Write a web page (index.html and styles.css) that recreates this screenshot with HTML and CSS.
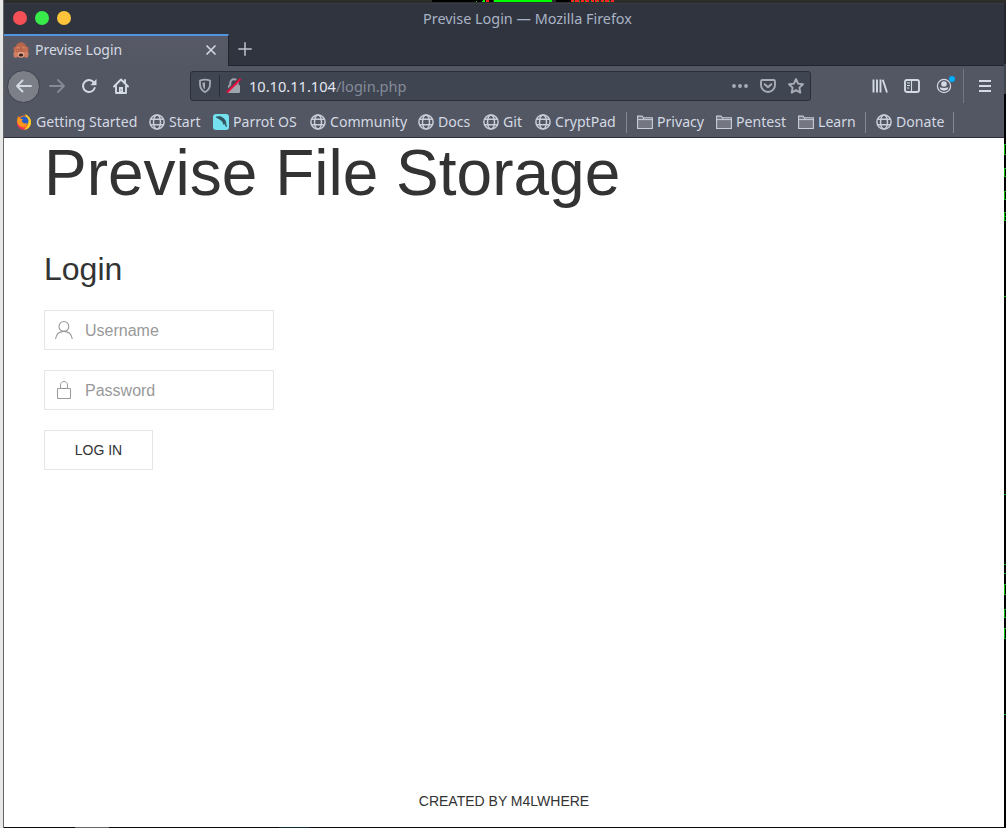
FILE: index.html
```html
<!DOCTYPE html>
<html lang="en">
<head>
<meta charset="utf-8">
<title>Previse Login</title>
<link rel="stylesheet" href="styles.css">
</head>
<body>
<svg class="defs" width="0" height="0" aria-hidden="true">
  <symbol id="globe" viewBox="0 0 16 16"><g fill="none" stroke="#c9cdd8" stroke-width="1.5"><circle cx="8" cy="8" r="7.1"/><ellipse cx="8" cy="8" rx="3.5" ry="7.1"/><path d="M1.6 5.3h12.8M1.6 10.7h12.8"/></g></symbol>
  <symbol id="folder" viewBox="0 0 16 16"><path d="M.6 14.500V2.100H5l1.500 1.700h8.900v10.700z" fill="#747782" stroke="#c9cdd8" stroke-width="1.100"/><path d="M.6 5.600h5l1.300-1.800" fill="none" stroke="#c9cdd8"/><path d="M5.500 5.600h9.900" stroke="#c9cdd8"/></symbol>
</svg>
<div class="desktop">
  <svg class="backdrop" width="1006" height="828" viewBox="0 0 1006 828" shape-rendering="crispEdges">
    <path fill="#2d2d2c" d="M0 0h1006v3H0z"/>
    <path fill="#000" d="M432 0h61v2h-61zM556 0h15v2h-15z"/>
    <path fill="#0f0" d="M494 0h58v2h-58zM483 0h2v2h-2z"/>
    <path stroke="#f22" stroke-width="2" stroke-dasharray="3 1 4 2" d="M571 1h43"/>
    <path stroke="#0d0" stroke-dasharray="1 5" d="M573 1.5h41M476 1.5h12"/>
    <path fill="#f22" d="M486 0h3v2h-3z"/>
    <path fill="#e8e8e8" d="M0 0h3v828H0z"/><path fill="#666" d="M3 0h1v828H3z"/>
    <path fill="#24262d" d="M1004 3h2v91h-2z"/><path fill="#000" d="M1004 94h2v734h-2z"/>
    <path fill="#41454e" d="M1004 64h2v30h-2z"/>
    <path fill="none" stroke="#0b0" d="M1006 144.500h-1.500v10h1.500M1006 168.500h-1.500v8h1.500M1006 191.500h-1.500v8h1.500M1006 212.500h-1.500v8h1.500M1004 216.500h2M1004 296.500h2M1004 494.500h2M1004 564.500h2M1004 573.500h2M1006 584.500h-1.500v10h1.500M1006 609.500h-1.500v8h1.500M1006 628.500h-1.500v10h1.500M1004 714.500h2"/>
    <path fill="#08090b" d="M4 827h1002v1H4z"/><path fill="#626762" d="M75 827h34v1H75z"/><path fill="#102a35" d="M279 827h31v1h-31z"/>
  </svg>
  <div class="window">
    <header class="titlebar">
      <div class="lights"><i class="light red"></i><i class="light green"></i><i class="light yellow"></i></div>
      <span class="window-title">Previse Login — Mozilla Firefox</span>
    </header>
    <div class="tabs">
      <div class="tab">
        <svg width="16" height="16" viewBox="0 0 16 16"><path fill="#b9644c" d="M2.500 4.500Q4 1 7 .5L8 0l1 .5q3 .5 4.500 4L15.500 5.500v3.500L13 10v5H3v-5L.5 9V5.500z"/><path fill="#d17f62" d="M2.800 5.500L7.500 4v6l-2.700 1-.5 4.500H1L.3 11l2-2.500zM13.200 5.500L8.500 4v6l2.700 1 .5 4.500H15l.7-4.500-2-2.500z"/><path stroke="#a24f39" fill="none" stroke-width=".8" d="M3 7.200h4M3 9.200h4M13 7.200H9M13 9.200H9M8 4.500v5.500"/><ellipse cx="8" cy="12.700" rx="3.500" ry="3" fill="#e0a285"/><ellipse cx="8" cy="13" rx="2.200" ry="1.500" fill="#38201d"/></svg>
        <span class="tab-title">Previse Login</span>
        <svg class="close" width="12" height="12" viewBox="0 0 12 12"><path d="M1.500 1.500l9 9m0-9l-9 9" stroke="#d0d4de" stroke-width="1.700"/></svg>
      </div>
      <svg class="plus" width="16" height="16" viewBox="0 0 16 16"><path d="M8 1.300v13.400M1.300 8h13.400" stroke="#bfc4cf" stroke-width="1.500"/></svg>
    </div>
    <nav class="toolbar">
      <div class="back"><svg width="18" height="16" viewBox="0 0 18 16"><path d="M16 8H2.500M7.500 2.500L2 8l5.500 5.500" fill="none" stroke="#d3dae3" stroke-width="2" stroke-linecap="round" stroke-linejoin="round"/></svg></div>
      <svg class="forward" width="17" height="16" viewBox="0 0 17 16"><path d="M1 8h14M9 2l6 6-6 6" fill="none" stroke="#868a95" stroke-width="1.800" stroke-linecap="round" stroke-linejoin="round"/></svg>
      <svg class="reload" width="16" height="16" viewBox="0 0 16 16"><path d="M13.700 10A6 6 0 1 1 13 4.600" fill="none" stroke="#d3dae3" stroke-width="2" stroke-linecap="round"/><path d="M15.500 1v6.200H9.300z" fill="#d3dae3"/></svg>
      <svg class="home" width="16" height="16" viewBox="0 0 16 16"><path d="M1 8.500L8 1.500l7 7M3 7.500V15h10V7.500M12 2v3" fill="none" stroke="#d3dae3" stroke-width="1.900" stroke-linejoin="round" stroke-linecap="round"/><path d="M6 9h4v6H6z" fill="#d3dae3"/><path d="M7.500 11.500h1v1h-1z" fill="#535663"/></svg>
      <div class="urlbar">
        <svg class="shield" width="14" height="16" viewBox="0 0 14 16"><path d="M2 2.500Q7 .8 12 2.500V6c0 4-1.500 6.500-5 8.200C3.500 12.500 2 10 2 6z" fill="none" stroke="#a7abb4" stroke-width="1.800" stroke-linejoin="round"/><path d="M7 4.300v7.300C5 10 4.500 8 4.500 4.700Z" fill="#a7abb4"/></svg>
        <i class="url-rule"></i>
        <svg class="lock" width="16" height="16" viewBox="0 0 16 16"><path d="M4.300 8V5a3.700 3.700 0 0 1 7.400 0v3" fill="none" stroke="#a0a4ad" stroke-width="2"/><rect x="2" y="7" width="12" height="8" rx="1" fill="#a0a4ad"/><path d="M1 13L13.500 0" stroke="#404550" stroke-width="2"/><path d="M1 14.500L14.500 1" stroke="#f40b3d" stroke-width="2"/></svg>
        <span class="address">10.10.11.104<span class="path">/login.php</span></span>
        <svg class="dots" width="16" height="16" viewBox="0 0 16 16" fill="#a9adb6"><circle cx="2" cy="8" r="1.900"/><circle cx="8" cy="8" r="1.900"/><circle cx="14" cy="8" r="1.900"/></svg>
        <svg class="pocket" width="16" height="16" viewBox="0 0 16 16" fill="none" stroke="#a9adb6" stroke-width="1.900" stroke-linecap="round" stroke-linejoin="round"><path d="M2.500 2h11Q15 2 15 3.500V7a7 7 0 0 1-14 0V3.500Q1 2 2.500 2z"/><path d="M4.700 6.200L8 9.300l3.300-3.100"/></svg>
        <svg class="star" width="16" height="16" viewBox="0 0 16 16"><path d="M8 1l2.100 4.600 4.900.6-3.600 3.400.9 5L8 12.200l-4.300 2.400.9-5L1 6.200l4.900-.6z" fill="none" stroke="#a9adb6" stroke-width="1.900" stroke-linejoin="round"/></svg>
      </div>
      <svg class="library" width="16" height="16" viewBox="0 0 16 16" stroke="#d3dae3" stroke-width="1.900"><path d="M1.500 1.500v13M5 1.500v13M8.500 1.500v13M10.800 1.800L15 14.500"/></svg>
      <svg class="sidebar" width="16" height="16" viewBox="0 0 16 16"><rect x="1" y="2" width="14" height="12" rx="2" fill="none" stroke="#d3dae3" stroke-width="1.900"/><path d="M7.500 2v12M3 5h3M3 7.500h3M3 10h2" stroke="#d3dae3" stroke-width="1.100"/></svg>
      <svg class="account" width="20" height="20" viewBox="0 0 20 20"><circle cx="8" cy="11" r="6.600" fill="none" stroke="#d3dae3" stroke-width="1.200"/><circle cx="8" cy="9" r="2.800" fill="#d3dae3"/><path d="M3.700 12.300Q8 13.500 12.300 12.300 12 15.500 8 15.700 4 15.500 3.700 12.300z" fill="#d3dae3"/><circle cx="16" cy="4" r="3" fill="#00aeff"/></svg>
      <i class="tool-rule"></i>
      <svg class="menu" width="12" height="14" viewBox="0 0 12 14"><path d="M0 2h12M0 7h12M0 12h12" stroke="#d3dae3" stroke-width="2"/></svg>
    </nav>
    <div class="bookmarks">
      <span class="bookmark started"><svg width="16" height="16" viewBox="0 0 16 16"><circle cx="8" cy="8.500" r="7" fill="#ff7a20"/><path d="M9 0c4 2 6.500 5 6 9-.5 4-3 6.500-7 6.800C12 13 13 9 11 6z" fill="#ffcb28"/><circle cx="8" cy="7" r="4.500" fill="#245bc4"/><path d="M2 2l2 2.500 3 .8-1.500 2L8 9.500l3-.5c-.5 2.500-2.500 4-5 3.800C2.500 12.500 1 10 1 7z" fill="#ff941e"/><path d="M1 7c.5 4.500 4 7 8 6.500l-1 2.200C3.500 15.700.5 12 1 7z" fill="#f0305a"/></svg><span>Getting Started</span></span>
      <span class="bookmark start"><svg width="16" height="16"><use href="#globe"/></svg><span>Start</span></span>
      <span class="bookmark parrot"><svg width="16" height="16" viewBox="0 0 16 16"><rect width="16" height="16" rx="3" fill="#74e2ee"/><path d="M3 3l4-.6 3.500 1.800L12.500 7l1 6-2-3.500-.8 1L9.500 7.500 7 5.500z" fill="#31515c" stroke="#31515c" stroke-width=".6"/></svg><span>Parrot OS</span></span>
      <span class="bookmark community"><svg width="16" height="16"><use href="#globe"/></svg><span>Community</span></span>
      <span class="bookmark docs"><svg width="16" height="16"><use href="#globe"/></svg><span>Docs</span></span>
      <span class="bookmark git"><svg width="16" height="16"><use href="#globe"/></svg><span>Git</span></span>
      <span class="bookmark cryptpad"><svg width="16" height="16"><use href="#globe"/></svg><span>CryptPad</span></span>
      <i class="rule"></i>
      <span class="bookmark privacy"><svg width="16" height="16"><use href="#folder"/></svg><span>Privacy</span></span>
      <span class="bookmark pentest"><svg width="16" height="16"><use href="#folder"/></svg><span>Pentest</span></span>
      <span class="bookmark learn"><svg width="16" height="16"><use href="#folder"/></svg><span>Learn</span></span>
      <i class="rule"></i>
      <span class="bookmark donate"><svg width="16" height="16"><use href="#globe"/></svg><span>Donate</span></span>
      <i class="rule"></i>
    </div>
    <main class="page">
      <h1>Previse File Storage</h1>
      <h2>Login</h2>
      <form class="login">
        <label class="field"><svg width="20" height="20" viewBox="0 0 20 20" fill="none" stroke="#999" stroke-width="1.100"><circle cx="9.900" cy="6.400" r="4.900"/><path d="M1.500 19c.8-4.700 4.200-7.600 8.400-7.600s7.600 2.900 8.400 7.600"/></svg><input type="text" placeholder="Username"></label>
        <label class="field"><svg width="20" height="20" viewBox="0 0 20 20" fill="none" stroke="#999"><path d="M3.500 8.500h13v10h-13zM6.500 8V4.900C6.500 3 8 1.500 10 1.500s3.500 1.500 3.500 3.400V8"/></svg><input type="password" placeholder="Password"></label>
        <button type="button">LOG IN</button>
      </form>
      <footer>CREATED BY M4LWHERE</footer>
    </main>
  </div>
</div>
</body>
</html>
```
FILE: styles.css
```css
* { box-sizing: border-box; }
body { margin: 0; overflow: hidden; font-family: "Noto Sans", sans-serif; font-size: 14px; color: #d3dae3; }
svg { display: block; flex: none; }
.defs { position: absolute; }
.desktop { position: relative; width: 1006px; height: 828px; padding: 3px 2px 1px 4px; }
.backdrop { position: absolute; top: 0; left: 0; }
.window { position: relative; width: 1000px; height: 824px; display: flex; flex-direction: column; background: #fff; }
.titlebar { height: 31px; display: grid; grid-template-columns: 200px 1fr 153px; align-items: center; background: #2f343f; border-top: 1px solid #363b46; }
.lights { display: flex; gap: 8px; padding-left: 9px; margin-top: -2px; }
.light { width: 14px; height: 14px; border-radius: 50%; }
.red { background: #f45056; }
.green { background: #38eb4b; }
.yellow { background: #fdc43b; }
.window-title { text-align: center; font-size: 14.400px; line-height: 20px; color: #a9b3c4; padding-bottom: 1px; }
.tabs { height: 32px; display: flex; background: #2f343f; border-bottom: 1px solid #21242c; }
.tab { width: 225px; height: 32px; display: flex; align-items: center; padding: 0 11px 0 9px; background: linear-gradient(#575a66, #535663); border-top: 2px solid #5294e2; border-right: 1px solid #21242c; }
.tab > svg { margin-bottom: 2px; }
.tab-title { margin-left: 6px; flex: 1; line-height: 20px; padding-bottom: 2px; }
.plus { margin: 7px 0 0 8px; }
.toolbar { height: 41px; display: flex; align-items: center; padding-bottom: 1px; background: #535663; }
.back { width: 33px; height: 33px; margin-left: 3px; border: 1px solid #3e424d; border-radius: 50%; background: #7c7f87; display: flex; align-items: center; justify-content: center; }
.forward { margin-left: 9px; }
.reload { margin-left: 15px; }
.home { margin-left: 16px; }
.urlbar { width: 621px; height: 30px; margin-left: 61px; border: 1px solid #2b2e39; border-radius: 3px; background: #404552; display: flex; align-items: center; }
.shield { margin-left: 7px; }
.url-rule { width: 1px; height: 22px; margin-left: 7px; background: #2b2e39; }
.lock { margin-left: 6px; }
.address { margin-left: 7px; flex: 1; font-size: 14.600px; color: #e2e7ef; line-height: 20px; }
.path { color: #858b98; }
.pocket, .star { margin-left: 12px; }
.star { margin-right: 6px; }
.library { margin-left: 61px; }
.sidebar { margin-left: 16px; }
.account { margin: -2px 0 0 16px; }
.tool-rule { width: 1px; height: 34px; margin-left: 7px; background: #747782; }
.menu { margin-left: 15px; }
.bookmarks { height: 31px; display: flex; align-items: center; padding-left: 12px; background: #535663; border-bottom: 1px solid #2b2e39; }
.bookmark { display: flex; flex: none; align-items: center; gap: 4px; margin-right: 12px; white-space: nowrap; line-height: 20px; }
.bookmark > span { padding-bottom: 1px; font-size: 14.100px; }
.started { width: 121px; }
.start { width: 52px; }
.parrot { width: 85px; }
.community { width: 96px; }
.docs { width: 53px; }
.git { width: 40px; }
.cryptpad { width: 82px; }
.privacy { width: 67px; }
.pentest { width: 70px; }
.learn { width: 58px; }
.donate { width: 68px; }
.rule { width: 1px; height: 21px; margin: 0 10px 0 -3px; background: #858893; }
.page { flex: 1; display: flex; flex-direction: column; align-items: flex-start; padding: 0 40px; background: #fff; color: #333; font-family: "Liberation Sans", Arial, sans-serif; }
h1 { margin: 0; font-size: 64px; font-weight: 400; line-height: 70px; }
h2 { margin: 40px 0 20px; font-size: 32px; font-weight: 400; line-height: 42px; }
.login { display: flex; flex-direction: column; gap: 20px; align-items: flex-start; }
.field { width: 230px; height: 40px; border: 1px solid #e5e5e5; display: flex; align-items: center; padding-left: 9px; }
.field input { width: 180px; margin-left: 11px; padding: 2px 0 0; border: 0; outline: 0; font: 16px "Liberation Sans", Arial, sans-serif; color: #666; background: transparent; }
.field input::placeholder { color: #999; opacity: 1; }
button { width: 109px; height: 40px; padding: 0; border: 1px solid #e5e5e5; background: transparent; color: #333; font: 14px "Liberation Sans", Arial, sans-serif; }
footer { align-self: center; margin-top: auto; margin-bottom: 15px; font-size: 14px; line-height: 21px; }
```
